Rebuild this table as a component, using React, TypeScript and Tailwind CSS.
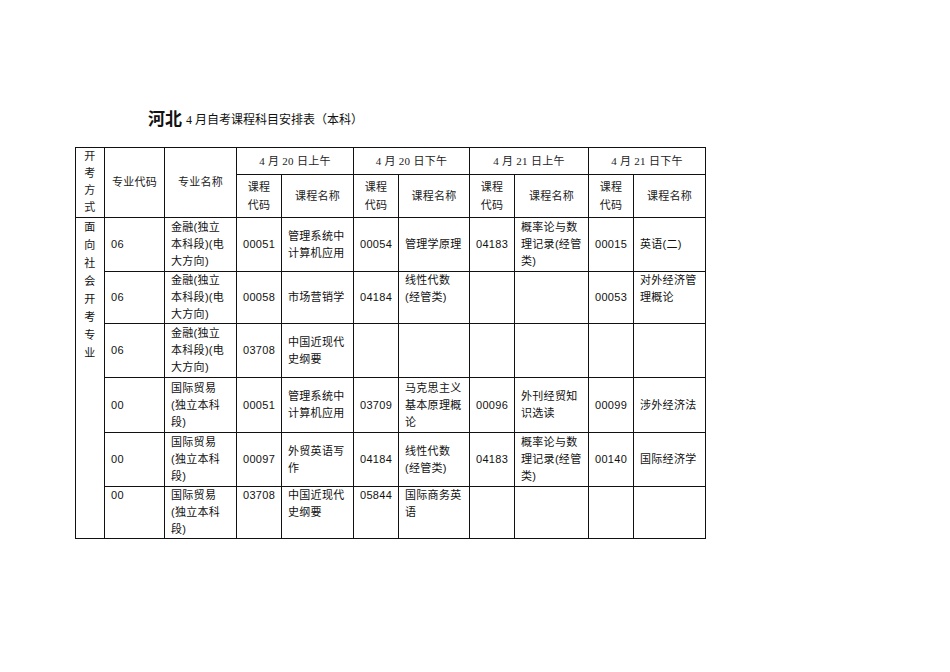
import React from 'react';

type Cell = { lines: string[]; top?: boolean };

interface Row {
  code: Cell;
  name: Cell;
  exams: [Cell, Cell][];
  top?: boolean;
  h: string;
}

const c = (...lines: string[]): Cell => ({ lines });
const t = (...lines: string[]): Cell => ({ lines, top: true });
const empty: [Cell, Cell] = [c(), c()];

const rows: Row[] = [
  {
    code: c('06'),
    name: c('金融(独立', '本科段)(电', '大方向)'),
    exams: [
      [c('00051'), c('管理系统中', '计算机应用')],
      [c('00054'), c('管理学原理')],
      [c('04183'), c('概率论与数', '理记录(经管', '类)')],
      [c('00015'), c('英语(二)')],
    ],
    h: 'h-[54px]',
  },
  {
    code: c('06'),
    name: c('金融(独立', '本科段)(电', '大方向)'),
    exams: [
      [c('00058'), c('市场营销学')],
      [c('04184'), t('线性代数', '(经管类)')],
      empty,
      [c('00053'), t('对外经济管', '理概论')],
    ],
    h: 'h-[52px]',
  },
  {
    code: c('06'),
    name: c('金融(独立', '本科段)(电', '大方向)'),
    exams: [[c('03708'), c('中国近现代', '史纲要')], empty, empty, empty],
    h: 'h-[54px]',
  },
  {
    code: c('00'),
    name: c('国际贸易', '(独立本科', '段)'),
    exams: [
      [c('00051'), c('管理系统中', '计算机应用')],
      [c('03709'), c('马克思主义', '基本原理概', '论')],
      [c('00096'), c('外刊经贸知', '识选读')],
      [c('00099'), c('涉外经济法')],
    ],
    h: 'h-[55px]',
  },
  {
    code: c('00'),
    name: c('国际贸易', '(独立本科', '段)'),
    exams: [
      [c('00097'), c('外贸英语写', '作')],
      [c('04184'), c('线性代数', '(经管类)')],
      [c('04183'), c('概率论与数', '理记录(经管', '类)')],
      [c('00140'), c('国际经济学')],
    ],
    h: 'h-[54px]',
  },
  {
    code: c('00'),
    name: c('国际贸易', '(独立本科', '段)'),
    exams: [[c('03708'), c('中国近现代', '史纲要')], [c('05844'), c('国际商务英', '语')], empty, empty],
    top: true,
    h: 'h-[51px]',
  },
];

const sessions = ['4 月 20 日上午', '4 月 20 日下午', '4 月 21 日上午', '4 月 21 日下午'];
const widths = [29, 60, 72, 45, 72, 45, 71, 45, 74, 45, 72];

const serif = 'font-["Liberation_Serif","Noto_Sans_CJK_SC",serif]';
const bd = 'border border-[#111]';

function BodyCell({ cell, rowTop }: { cell: Cell; rowTop?: boolean }) {
  return (
    <td className={`${bd} px-[6px] ${cell.top || rowTop ? 'align-top' : 'align-middle'}`}>
      {cell.lines.map((l, i) => (
        <div key={i} className="whitespace-nowrap">
          {l}
        </div>
      ))}
    </td>
  );
}

export default function App() {
  return (
    <div className="min-h-[672px] w-[950px] bg-white pl-[75px] pt-[105px] text-[#111] font-['Liberation_Sans','Noto_Sans_CJK_SC',sans-serif]">
      <div className="flex items-end pl-[73px] h-[24px]">
        <span className="text-[17px] font-bold leading-[22px] font-['Noto_Sans_CJK_SC',sans-serif]">河北</span>
        <span className={`ml-[4px] text-[12px] leading-[18px] ${serif}`}>
          4 月自考课程科目安排表（本科）
        </span>
      </div>
      <table className="mt-[18px] w-[630px] table-fixed border-collapse text-[11px] leading-[17px] tracking-[0.3px]">
        <colgroup>
          {widths.map((w, i) => (
            <col key={i} style={{ width: w }} />
          ))}
        </colgroup>
        <thead className={`${serif} text-[#222] font-normal`}>
          <tr className="h-[27px]">
            <th rowSpan={2} className={`${bd} align-top text-center font-normal`}>
              {'开考方式'.split('').map((ch, i) => (
                <div key={i}>{ch}</div>
              ))}
            </th>
            <th rowSpan={2} className={`${bd} text-center font-normal`}>
              专业代码
            </th>
            <th rowSpan={2} className={`${bd} text-center font-normal`}>
              专业名称
            </th>
            {sessions.map((s) => (
              <th key={s} colSpan={2} className={`${bd} text-center font-normal leading-[16px]`}>
                {s}
              </th>
            ))}
          </tr>
          <tr className="h-[43px]">
            {sessions.map((s) => (
              <React.Fragment key={s}>
                <th className={`${bd} text-center font-normal leading-[18px]`}>
                  <div>课程</div>
                  <div>代码</div>
                </th>
                <th className={`${bd} text-center font-normal`}>课程名称</th>
              </React.Fragment>
            ))}
          </tr>
        </thead>
        <tbody>
          {rows.map((r, ri) => (
            <tr key={ri} className={r.h}>
              {ri === 0 && (
                <td rowSpan={rows.length} className={`${bd} align-top text-center leading-[18px] ${serif}`}>
                  {'面向社会开考专业'.split('').map((ch, i) => (
                    <div key={i}>{ch}</div>
                  ))}
                </td>
              )}
              <BodyCell cell={r.code} rowTop={r.top} />
              <BodyCell cell={r.name} rowTop={r.top} />
              {r.exams.map(([code, name], ei) => (
                <React.Fragment key={ei}>
                  <BodyCell cell={code} rowTop={r.top} />
                  <BodyCell cell={name} rowTop={r.top} />
                </React.Fragment>
              ))}
            </tr>
          ))}
        </tbody>
      </table>
    </div>
  );
}
